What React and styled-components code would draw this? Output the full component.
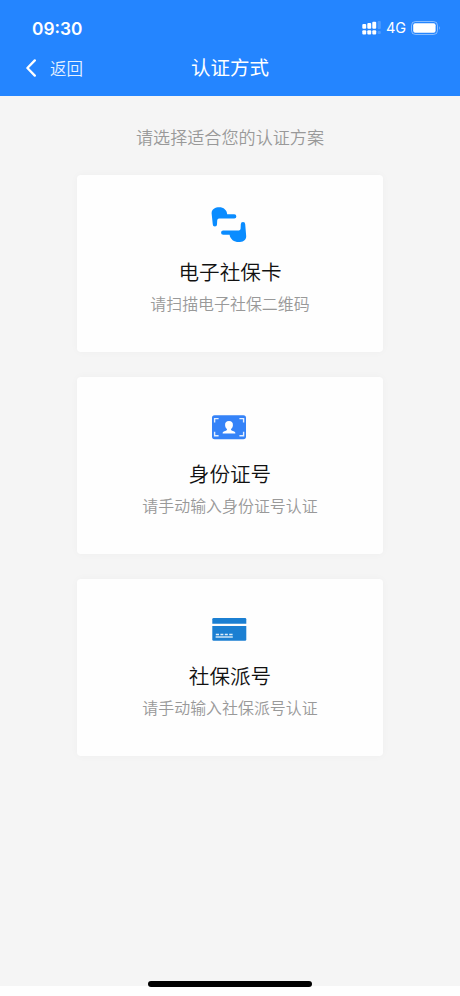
import React from 'react'
import styled, { createGlobalStyle } from 'styled-components'

const methods = [
    { name: '电子社保卡', hint: '请扫描电子社保二维码', Icon: Hands_Icon },
    { name: '身份证号', hint: '请手动输入身份证号认证', Icon: Id_Icon },
    { name: '社保派号', hint: '请手动输入社保派号认证', Icon: Bank_Card_Icon },
]

export default function App() {
    return (
        <Page>
            <Global_Style />
            <Header>
                <Status_Bar>
                    <Time>09:30</Time>
                    <Status_Icons>
                        <Signal_Icon />
                        <Network>4G</Network>
                        <Battery_Icon />
                    </Status_Icons>
                </Status_Bar>
                <Nav_Bar>
                    <Back>
                        <svg width="12" height="18" viewBox="0 0 12 18" fill="none">
                            <path d="M9.8 1.4 L2.4 9 L9.8 16.6" stroke="#fff" strokeWidth="2.3" strokeLinecap="round" strokeLinejoin="round" />
                        </svg>
                        <Back_Text>返回</Back_Text>
                    </Back>
                    <Title>认证方式</Title>
                </Nav_Bar>
            </Header>
            <Content>
                <Prompt>请选择适合您的认证方案</Prompt>
                <Methods>
                    {methods.map(({ name, hint, Icon }) => (
                        <Card key={name}>
                            <Icon />
                            <Card_Name>{name}</Card_Name>
                            <Card_Hint>{hint}</Card_Hint>
                        </Card>
                    ))}
                </Methods>
            </Content>
            <Footer>
                <Home_Indicator />
            </Footer>
        </Page>
    )
}

function Signal_Icon() {
    return (
        <svg width="20" height="14" viewBox="0 0 20 14" fill="#fff">
            <rect x="0.3" y="3" width="3.9" height="4.8" rx="1" />
            <rect x="5.3" y="2" width="3.9" height="5.8" rx="1" />
            <rect x="10.3" y="0.8" width="3.9" height="7" rx="1" />
            <rect x="0.3" y="9.2" width="3.9" height="4.2" rx="1" />
            <rect x="5.3" y="9.2" width="3.9" height="4.2" rx="1" />
            <rect x="10.3" y="9.2" width="3.9" height="4.2" rx="1" />
            <rect x="15.6" y="0" width="3.2" height="8" rx="1" opacity="0.2" />
            <rect x="15.6" y="10" width="3.2" height="3" rx="1" opacity="0.2" />
        </svg>
    )
}

function Battery_Icon() {
    return (
        <svg width="30" height="14" viewBox="0 0 30 14">
            <rect x="0.5" y="0.5" width="26" height="13" rx="4" fill="none" stroke="#fff" strokeOpacity="0.45" />
            <rect x="2.2" y="2.2" width="22.4" height="9.6" rx="2" fill="#fff" />
            <path d="M28 5 Q29.6 7 28 9 Z" fill="#fff" fillOpacity="0.5" />
        </svg>
    )
}

function Hands_Icon() {
    return (
        <Icon_Svg viewBox="0 0 36 36" fill="#0a8cff">
            <path d="M0.6 6.2 C0.6 2 4.4 0.3 8.2 0.3 C12.6 0.3 15.9 3 16.2 7.3 H23.2 A2.1 2.1 0 0 1 23.2 11.6 H8 Q6.4 11.8 6.2 13.4 L6 17.4 A2.1 2.1 0 0 1 1.8 17.4 Z" />
            <path d="M35.2 29.2 C35.2 33.4 31.4 35.1 27.6 35.1 C23.2 35.1 19.2 32.4 18.6 27.8 H12.2 A2.1 2.1 0 0 1 12.2 23.5 H27.8 Q29.4 23.3 29.6 21.7 L29.8 17.2 A2.2 2.2 0 0 1 34.2 17.2 Z" />
        </Icon_Svg>
    )
}

function Id_Icon() {
    return (
        <Icon_Svg viewBox="0 0 36 36">
            <rect x="1" y="6.2" width="34" height="24" rx="2.6" fill="#3583f8" />
            <path d="M3.6 13.4 V9.6 H7.6 M28.4 9.6 H32.6 V13.4 M32.6 22.8 V26.8 H28.4 M7.6 26.8 H3.6 V22.8" fill="none" stroke="#e4efff" strokeWidth="1.4" />
            <path d="M18 12 C20.8 12 22.2 13.8 21.9 16.4 C21.7 18.2 20.9 19.2 20 20 C20 21 20.3 21.4 21.2 21.7 C23.4 22.4 24.3 22.6 24.4 24.4 H11.6 C11.7 22.6 12.6 22.4 14.8 21.7 C15.7 21.4 16 21 16 20 C15.1 19.2 14.3 18.2 14.1 16.4 C13.8 13.8 15.2 12 18 12 Z" fill="#fff" />
        </Icon_Svg>
    )
}

function Bank_Card_Icon() {
    return (
        <Icon_Svg viewBox="0 0 36 36">
            <path d="M2.6 7 H34 Q35.3 7 35.3 8.3 V12.8 H1.3 V8.3 Q1.3 7 2.6 7 Z" fill="#1b7fd2" />
            <path d="M1.3 15 H35.3 V28.4 Q35.3 29.7 34 29.7 H2.6 Q1.3 29.7 1.3 28.4 Z" fill="#1b7fd2" />
            <path d="M4.8 23.5 H8 M9.4 23.5 H12.4 M13.8 23.5 H16.8 M18.2 23.5 H21.6" stroke="#e0eefa" strokeWidth="1.4" />
            <path d="M4.6 26 H21.8" stroke="#cfe4f6" strokeWidth="1.5" />
        </Icon_Svg>
    )
}

const Global_Style = createGlobalStyle`
    body {
        margin: 0;
        background: #fff;
        font-family: 'Noto Sans CJK SC', sans-serif;
    }
`

const Page = styled.div`
    display: flex;
    flex-direction: column;
    height: 996px;
    overflow: hidden;
`

const Header = styled.header`
    height: 96px;
    flex-shrink: 0;
    background: #2485ff;
    color: #fff;
`

const Status_Bar = styled.div`
    display: flex;
    align-items: center;
    justify-content: space-between;
    height: 40px;
    padding: 16px 19px 0 32px;
    box-sizing: border-box;
    font-family: Inter, sans-serif;
`

const Time = styled.div`
    padding-top: 1px;
    font-size: 17.3px;
    font-weight: 600;
    line-height: 24px;
`

const Status_Icons = styled.div`
    display: flex;
    align-items: center;
`

const Network = styled.div`
    width: 20px;
    margin: 0 5px 0 4px;
    font-size: 14.5px;
    line-height: 24px;
    font-weight: 400;
`

const Nav_Bar = styled.div`
    display: grid;
    grid-template-columns: 1fr auto 1fr;
    align-items: center;
    height: 55px;
`

const Back = styled.div`
    display: flex;
    align-items: center;
    padding-left: 25px;
`

const Back_Text = styled.span`
    margin-left: 13px;
    font-size: 16.5px;
    line-height: 24px;
    font-weight: 350;
    color: #e6f1ff;
`

const Title = styled.h1`
    margin: 0;
    padding-bottom: 1px;
    font-size: 19.5px;
    line-height: 28px;
    font-weight: 400;
`

const Content = styled.main`
    flex: 1;
    background: #f5f5f5;
`

const Prompt = styled.p`
    margin: 28px 0 26px;
    font-size: 17.1px;
    line-height: 25px;
    font-weight: 350;
    text-align: center;
    color: #999;
`

const Methods = styled.div`
    display: flex;
    flex-direction: column;
    align-items: center;
    gap: 25px;
`

const Card = styled.div`
    display: flex;
    flex-direction: column;
    align-items: center;
    width: 306px;
    height: 177px;
    padding-top: 32px;
    box-sizing: border-box;
    border-radius: 4px;
    background: #fefefe;
    box-shadow: 0 0 8px rgba(0, 0, 0, 0.03);
`

const Icon_Svg = styled.svg`
    width: 36px;
    height: 36px;
    margin-right: 2px;
`

const Card_Name = styled.div`
    margin-top: 14px;
    font-size: 20.6px;
    line-height: 28px;
    font-weight: 350;
    color: #111;
`

const Card_Hint = styled.div`
    margin-top: 6px;
    font-size: 15.95px;
    line-height: 24px;
    font-weight: 350;
    color: #999;
`

const Footer = styled.footer`
    display: flex;
    justify-content: center;
    height: 15px;
    background: linear-gradient(#f5f5f5 5px, #fefefe 5px);
`

const Home_Indicator = styled.div`
    width: 164px;
    height: 5.6px;
    border-radius: 3px;
    background: #000;
`
